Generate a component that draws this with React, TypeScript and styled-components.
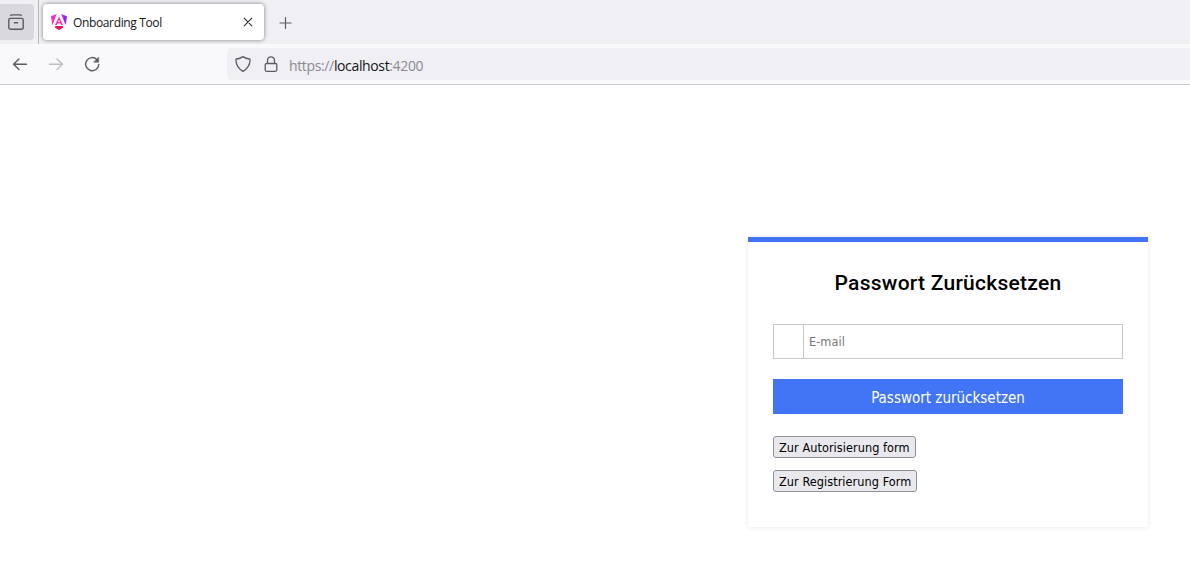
import React from 'react';
import styled, { createGlobalStyle } from 'styled-components';

const GlobalStyle = createGlobalStyle`
  *, *::before, *::after { box-sizing: border-box; }
  html, body { margin: 0; padding: 0; background: #fff; overflow: hidden; }
  button, input { margin: 0; font: inherit; }
`;

const uiFont = `'Open Sans', 'Noto Sans', sans-serif`;
const formFont = `'DejaVu Sans Condensed', 'DejaVu Sans', sans-serif`;

const Browser = styled.div`
  display: flex;
  flex-direction: column;
  width: 100%;
  height: 569px;
  font-family: ${uiFont};
  overflow: hidden;
`;

const TabStrip = styled.div`
  display: flex;
  height: 44px;
  flex: none;
  background: #f0eff4;
`;

const RecentButton = styled.div`
  display: flex;
  align-items: center;
  width: 34px;
  height: 36px;
  margin-top: 4px;
  padding-left: 7px;
  border-radius: 0 4px 4px 0;
  background: #d9d8dd;
`;

const StripDivider = styled.div`
  width: 1px;
  height: 44px;
  margin: 0 4px;
  background: #b9b8bf;
`;

const Tab = styled.div`
  display: flex;
  align-items: center;
  width: 221px;
  height: 36px;
  margin-top: 4px;
  padding: 0 8px;
  border-radius: 4px;
  background: #fff;
  box-shadow: 0 0 4px rgba(0, 0, 0, 0.48);
`;

const TabTitle = styled.span`
  flex: 1;
  margin-left: 6px;
  padding-top: 2px;
  font-size: 12px;
  line-height: 18px;
  letter-spacing: -0.36px;
  white-space: nowrap;
  color: #15141a;
`;

const NewTab = styled.div`
  display: flex;
  align-items: center;
  margin: 1px 0 0 14px;
`;

const Toolbar = styled.div`
  display: flex;
  align-items: center;
  flex: none;
  height: 41px;
  padding-left: 11px;
  border-bottom: 1px solid #ccccce;
  background: #f9f9fb;
`;

const NavButtons = styled.div`
  display: flex;
  gap: 18px;
  width: 216px;
`;

const AddressBar = styled.div`
  display: flex;
  align-items: center;
  flex: 1;
  height: 32px;
  padding-left: 7px;
  border-radius: 4px 0 0 4px;
  background: #f0eff4;
`;

const ShieldSlot = styled.span`
  display: flex;
  margin-right: 11px;
`;

const Url = styled.span`
  margin: 3px 0 0 10px;
  font-size: 14px;
  line-height: 20px;
  letter-spacing: -0.36px;
  white-space: nowrap;
  color: #8b8a91;
`;

const Host = styled.span`
  color: #15141a;
`;

const Page = styled.main`
  display: flex;
  justify-content: flex-end;
  align-items: flex-start;
  flex: 1;
  padding: 152px 42px 0 0;
  background: #fff;
`;

const Card = styled.form`
  display: flex;
  flex-direction: column;
  align-items: flex-start;
  width: 400px;
  height: 290px;
  padding: 0 25px;
  border-top: 5px solid #4175f5;
  background: #fff;
  box-shadow: 0 0 5px rgba(0, 0, 0, 0.1);
  font-family: ${formFont};
`;

const Heading = styled.h1`
  align-self: stretch;
  margin: 26px 0 26px;
  font-family: Roboto, sans-serif;
  font-size: 21px;
  font-weight: 500;
  line-height: 30px;
  letter-spacing: 0.26px;
  text-align: center;
  white-space: nowrap;
  color: #000;
`;

const Field = styled.div`
  display: flex;
  width: 350px;
  height: 35px;
  border: 1px solid #c8c8c8;
`;

const FieldIcon = styled.span`
  flex: none;
  width: 30px;
  border-right: 1px solid #c8c8c8;
`;

const Input = styled.input`
  flex: 1;
  min-width: 0;
  padding: 0 5px 1px;
  border: 0;
  outline: 0;
  background: transparent;
  font-size: 12.6px;
  letter-spacing: 0.06px;
  &::placeholder { color: #757575; opacity: 1; }
`;

const Submit = styled.button`
  width: 350px;
  height: 35px;
  margin: 20px 0 22px;
  padding: 2px 0 0;
  border: 0;
  background: #4175f5;
  color: #fff;
  font-size: 15px;
  line-height: 20px;
`;

const LinkButton = styled.button`
  height: 22px;
  margin-bottom: 12px;
  padding: 2px 5px 0;
  border: 1px solid #8f8f9d;
  border-radius: 3px;
  background: #e9e9ed;
  color: #000;
  font-size: 12.6px;
  line-height: 18px;
  letter-spacing: 0.05px;
  white-space: nowrap;
`;

const Glyph = ({ children, color = '#5b5b66', size = 18 }: { children: React.ReactNode; color?: string; size?: number }) => (
  <svg width={size} height={size} viewBox={`0 0 ${size} ${size}`} fill="none" stroke={color} strokeWidth="1.3" strokeLinecap="round" strokeLinejoin="round">
    {children}
  </svg>
);

const AngularLogo = () => (
  <svg width="16" height="16" viewBox="0 0 16 16">
    <defs>
      <linearGradient id="wing" x1="0" y1="0" x2="1" y2="1">
        <stop offset="0" stopColor="#c026f0" />
        <stop offset="1" stopColor="#6c20ff" />
      </linearGradient>
    </defs>
    <path d="M5.8 0 0 2.2 1.3 11.2z" fill="#f52bcb" />
    <path d="M10.2 0 16 2.2l-1.3 9z" fill="url(#wing)" />
    <path d="M8 2.6 4 11h1.8l.8-1.6h2.8l.8 1.6H12z" fill="#f637b4" />
    <path d="M8 5.7 7.1 8h1.8z" fill="#fff" />
    <path d="M4.5 12.1h7l.8 1.3L8 16l-4.3-2.6z" fill="#f20c55" />
  </svg>
);

export default function App() {
  return (
    <Browser>
      <GlobalStyle />
      <TabStrip>
        <RecentButton>
          <Glyph>
            <path d="M3.6 2.5C3.9 2 4.3 1.9 5 1.9h8c.7 0 1.1.1 1.4.6M3.2 5.4h11.6a1.4 1.4 0 0 1 1.4 1.4v7.6a1.8 1.8 0 0 1-1.8 1.8H3.6a1.8 1.8 0 0 1-1.8-1.8V6.8a1.4 1.4 0 0 1 1.4-1.4zM7.4 9.7h3.2" strokeWidth="1.4" />
          </Glyph>
        </RecentButton>
        <StripDivider />
        <Tab>
          <AngularLogo />
          <TabTitle>Onboarding Tool</TabTitle>
          <Glyph color="#2b2a33" size={16}>
            <path d="M4.2 4.2l7.6 7.6M11.8 4.2l-7.6 7.6" strokeWidth="1.1" />
          </Glyph>
        </Tab>
        <NewTab>
          <Glyph size={14}>
            <path d="M7.5 1.5v11M2 7h11" strokeWidth="1.2" />
          </Glyph>
        </NewTab>
      </TabStrip>
      <Toolbar>
        <NavButtons>
          <Glyph><path d="M15.5 9.3h-13M8 4 2.5 9.3 8 14.6" strokeWidth="1.4" /></Glyph>
          <Glyph color="#bdbdc2"><path d="M2.5 9.3h13M10 4l5.5 5.3-5.5 5.3" strokeWidth="1.4" /></Glyph>
          <Glyph>
            <path d="M15.8 9.5A6.6 6.6 0 1 1 13.8 4.4" strokeWidth="1.4" />
            <path d="M15.7 2.3v4.9h-4.9z" fill="#5b5b66" stroke="#5b5b66" strokeWidth="0.5" />
          </Glyph>
        </NavButtons>
        <AddressBar>
          <ShieldSlot>
            <Glyph>
              <path d="M9 1.6c1.9 1.3 4 2.1 6.4 2.4.4.1.7.3.7.8-.2 5.2-2.5 9-7.1 11.6C4.4 13.8 2.1 10 1.9 4.8c0-.5.3-.7.7-.8C5 3.7 7.1 2.9 9 1.6z" />
            </Glyph>
          </ShieldSlot>
          <Glyph size={16}>
            <path d="M3.5 7.5h9a1.3 1.3 0 0 1 1.3 1.3v5a1.5 1.5 0 0 1-1.5 1.5H3.7a1.5 1.5 0 0 1-1.5-1.5v-5a1.3 1.3 0 0 1 1.3-1.3zM4.5 7.5V4.3a3.5 3.5 0 0 1 7 0v3.2" />
          </Glyph>
          <Url>https://<Host>localhost</Host>:4200</Url>
        </AddressBar>
      </Toolbar>
      <Page>
        <Card onSubmit={(event) => event.preventDefault()}>
          <Heading>Passwort Zurücksetzen</Heading>
          <Field>
            <FieldIcon />
            <Input type="email" placeholder="E-mail" />
          </Field>
          <Submit type="submit">Passwort zurücksetzen</Submit>
          <LinkButton type="button">Zur Autorisierung form</LinkButton>
          <LinkButton type="button">Zur Registrierung Form</LinkButton>
        </Card>
      </Page>
    </Browser>
  );
}
